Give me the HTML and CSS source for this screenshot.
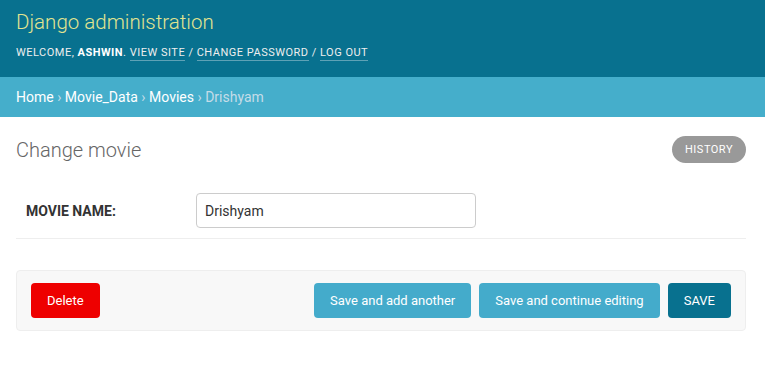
FILE: index.html
```html
<!DOCTYPE html>
<html lang="en">
<head>
    <meta charset="UTF-8">
    <title>Change movie | Django site admin</title>
    <link rel="stylesheet" href="styles.css">
</head>
<body>
    <div class="header">
        <div class="branding">Django administration</div>
        <div class="user-tools">
            Welcome, <strong>ashwin</strong>.
            <a href="#">View site</a> /
            <a href="#">Change password</a> /
            <a href="#">Log out</a>
        </div>
    </div>

    <div class="breadcrumbs">
        <a href="#">Home</a> &rsaquo;
        <a href="#">Movie_Data</a> &rsaquo;
        <a href="#">Movies</a> &rsaquo;
        Drishyam
    </div>

    <div class="content">
        <div class="title-row">
            <h1>Change movie</h1>
            <a href="#" class="historylink">History</a>
        </div>

        <div class="form-row">
            <label for="id_movie_name">Movie name:</label>
            <input type="text" id="id_movie_name" value="Drishyam">
        </div>

        <div class="submit-row">
            <a href="#" class="deletelink">Delete</a>
            <div class="actions">
                <button class="btn">Save and add another</button>
                <button class="btn">Save and continue editing</button>
                <button class="btn default">SAVE</button>
            </div>
        </div>
    </div>
</body>
</html>
```

FILE: styles.css
```css
body {
    margin: 0;
    font-family: Roboto, "Liberation Sans", sans-serif;
    color: #333;
    background: #fff;
}
a {
    text-decoration: none;
}
.header {
    background-color: #08718f;
    padding: 10px 16px 0 16px;
    height: 67px;
}
.branding {
    font-family: Roboto, sans-serif;
    font-weight: 300;
    font-size: 20.5px;
    color: #e2e48f;
    line-height: 24px;
}
.user-tools {
    margin-top: 12px;
    font-size: 11px;
    letter-spacing: 0.5px;
    text-transform: uppercase;
    color: #eee;
}
.user-tools strong {
    color: #fff;
}
.user-tools a {
    color: #eee;
    border-bottom: 1px solid rgba(255, 255, 255, 0.35);
    padding-bottom: 1px;
}
.breadcrumbs {
    background-color: #45aecb;
    padding: 0 16px;
    height: 40px;
    line-height: 40px;
    font-size: 14px;
    color: #c4dce8;
}
.breadcrumbs a {
    color: #fff;
}
.content {
    padding: 0 19px 0 16px;
}
.title-row {
    display: flex;
    justify-content: space-between;
    align-items: center;
    padding-top: 19px;
}
h1 {
    margin: 0;
    font-weight: 300;
    font-size: 20px;
    color: #666;
}
.historylink {
    background: #999;
    color: #fff;
    font-size: 11px;
    letter-spacing: 0.5px;
    text-transform: uppercase;
    border-radius: 15px;
    padding: 7px 13px;
    line-height: 13px;
}
.form-row {
    display: flex;
    align-items: center;
    padding: 30px 10px 10px 10px;
    border-bottom: 1px solid #eee;
}
.form-row label {
    width: 170px;
    font-size: 14px;
    font-weight: bold;
    text-transform: uppercase;
    color: #333;
}
.form-row input {
    width: 280px;
    height: 35px;
    box-sizing: border-box;
    border: 1px solid #ccc;
    border-radius: 4px;
    padding: 5px 8px;
    font-family: Roboto, sans-serif;
    font-size: 14px;
    color: #333;
}
.submit-row {
    margin-top: 31px;
    display: flex;
    justify-content: space-between;
    align-items: center;
    background: #f8f8f8;
    border: 1px solid #eee;
    border-radius: 4px;
    padding: 12px 14px;
}
.deletelink {
    background: #ee0000;
    color: #fff;
    font-size: 13px;
    border-radius: 4px;
    padding: 0 16px;
    height: 35px;
    line-height: 35px;
}
.actions {
    display: flex;
    gap: 8px;
}
.btn {
    background: #44abcb;
    color: #fff;
    border: none;
    border-radius: 4px;
    height: 35px;
    padding: 0 16px;
    font-family: Roboto, sans-serif;
    font-size: 13px;
}
.btn.default {
    background: #08718f;
}
```
